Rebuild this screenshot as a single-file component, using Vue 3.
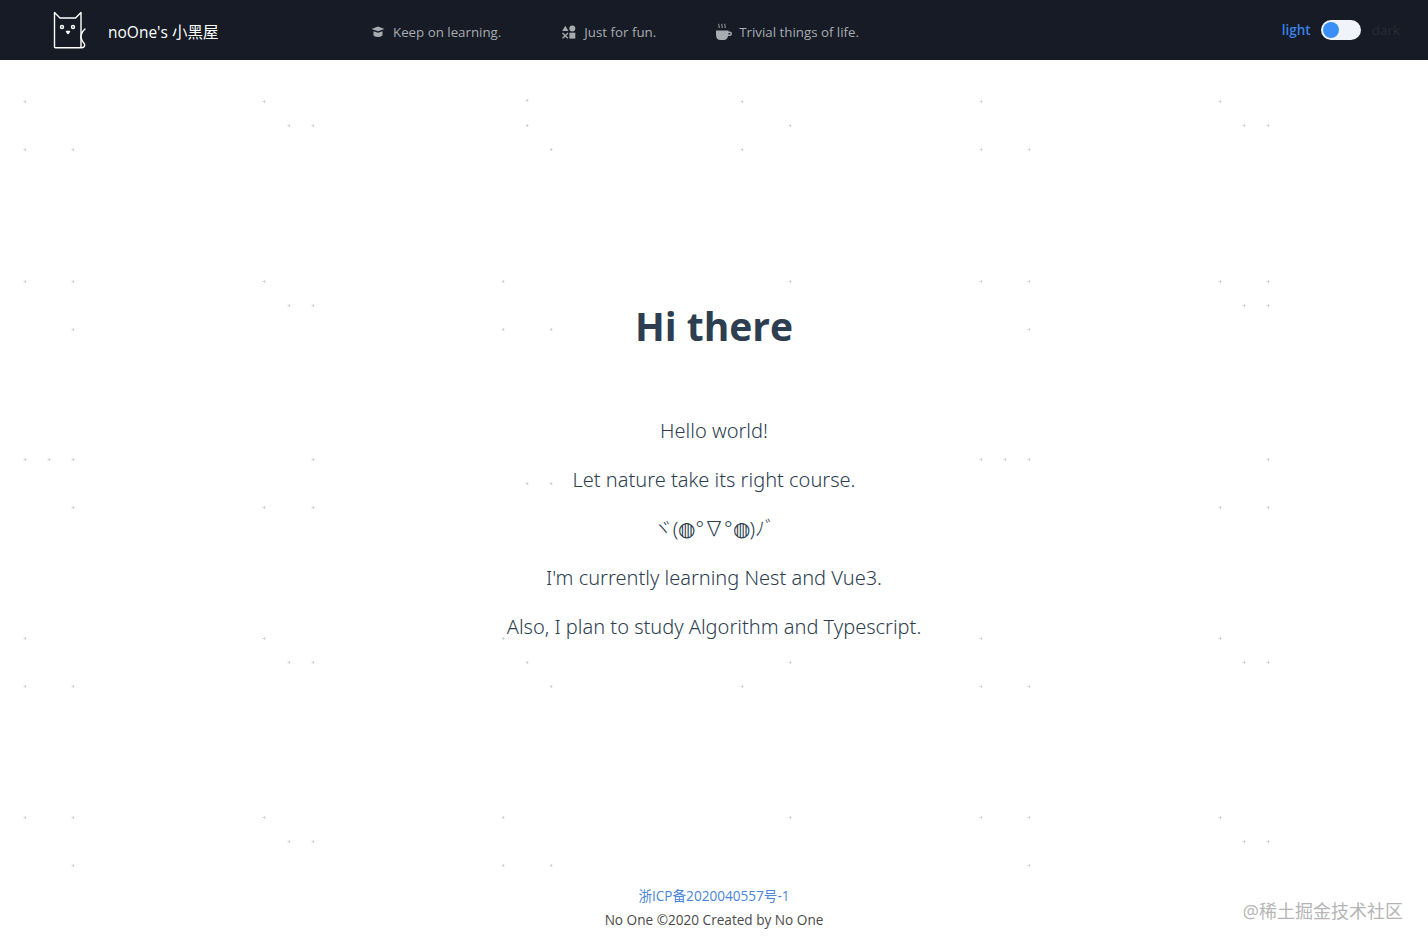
<script setup>
const navItems = [
  { key: 'learn', label: 'Keep on learning.' },
  { key: 'fun', label: 'Just for fun.' },
  { key: 'life', label: 'Trivial things of life.' },
];

const lines = [
  'Hello world!',
  'Let nature take its right course.',
  'ヾ(◍°∇°◍)ﾉﾞ',
  "I'm currently learning Nest and Vue3.",
  'Also, I plan to study Algorithm and Typescript.',
];

// star positions on the background canvas
const stars = [
  [25, 101], [264, 101], [527, 100], [742, 101], [981, 101], [1220, 101],
  [289, 125], [313, 125], [527, 125], [790, 125], [1244, 125], [1268, 125],
  [25, 149], [73, 149], [551, 149], [742, 149], [981, 149], [1029, 149],
  [25, 281], [73, 281], [264, 281], [503, 281], [790, 281], [981, 281], [1029, 281], [1220, 281], [1268, 281],
  [289, 305], [313, 305], [1244, 305], [1268, 305],
  [73, 329], [503, 329], [551, 329], [1029, 329],
  [25, 459], [49, 459], [73, 459], [313, 459], [981, 459], [1005, 459], [1029, 459], [1268, 459],
  [527, 483], [551, 483],
  [73, 507], [264, 507], [313, 507], [1220, 507], [1268, 507],
  [25, 638], [264, 638], [503, 638], [981, 638], [1220, 638],
  [289, 662], [313, 662], [527, 662], [790, 662], [1244, 662], [1268, 662],
  [25, 686], [73, 686], [551, 686], [742, 686], [981, 686], [1029, 686],
  [25, 817], [73, 817], [264, 817], [503, 817], [790, 817], [981, 817], [1029, 817], [1220, 817],
  [289, 841], [313, 841], [1244, 841], [1268, 841],
  [73, 865], [503, 865], [551, 865], [1029, 865],
];
</script>

<template>
  <div class="page">
    <svg class="stars" width="1428" height="947" viewBox="0 0 1428 947">
      <g v-for="s in stars" :key="s[0] + '-' + s[1]">
        <path :d="`M${s[0] - 1.5} ${s[1] + 0.5}h3M${s[0] + 0.5} ${s[1] - 1}v3`" stroke="#d4d4d4" stroke-width="1" />
      </g>
    </svg>

    <header class="topbar">
      <div class="brand">
        <svg class="logo" width="34" height="38" viewBox="0 0 34 38" fill="none" stroke="#fff" stroke-width="1.4" stroke-linejoin="round" stroke-linecap="round">
          <path d="M1.500 1.500 7 7H22.500L28 1.500V35.700q0 1-1 1H2.500q-1 0-1-1z" />
          <path d="M32 18Q27.500 22 28 27Q29 30 31.500 33Q32.500 36.500 28 36.700" />
          <circle cx="9" cy="16" r="1.500" />
          <circle cx="20" cy="16" r="1.500" />
          <path d="M13.500 20.500h3l-1.500 2z" fill="#fff" />
        </svg>
        <span class="brand-name">noOne's 小黑屋</span>
      </div>

      <nav class="nav">
        <a v-for="item in navItems" :key="item.key" class="nav-item">
          <svg v-if="item.key === 'learn'" class="nav-icon" width="14" height="14" viewBox="0 0 14 14" fill="#a8abb0">
            <path d="M7 1.500 13.500 4 7 6.300 .5 4z" />
            <path d="M2.500 6.300 7 7.800l4.500-1.500V10.500Q7 13.500 2.500 10.500z" />
          </svg>
          <svg v-else-if="item.key === 'fun'" class="nav-icon" width="14" height="14" viewBox="0 0 14 14" fill="#a8abb0">
            <path d="M3.300 .8 6.400 6H.2z" />
            <circle cx="10.300" cy="3.500" r="3" />
            <path d="M1 7.600l2.300 2.100L5.500 7.600l.9 1-2.100 2.100 2.100 2.100-.9 1-2.200-2.100L1 13.800l-1-1 2.300-2.100L0 8.600z" />
            <rect x="7.400" y="7.700" width="5.900" height="5.900" />
          </svg>
          <svg v-else class="nav-icon cup" width="18" height="18" viewBox="0 0 18 18" fill="#a8abb0">
            <path d="M1 7.500h12.500v1h1.300a2.200 2.200 0 0 1 0 4.400h-1.700Q12 17 9 17H5.500Q1 17 1 11.500zM13.500 10v1.600h1.200a.8.800 0 0 0 0-1.600z" />
            <path d="M4 .8c-.9 1.200.9 2.600 0 4.200M7 .8c-.9 1.200.9 2.600 0 4.200M10 .8c-.9 1.200.9 2.600 0 4.200" fill="none" stroke="#a8abb0" stroke-width="1" />
          </svg>
          <span>{{ item.label }}</span>
        </a>
      </nav>

      <div class="theme">
        <span class="theme-light">light</span>
        <span class="switch"><i class="knob"></i></span>
        <span class="theme-dark">dark</span>
      </div>
    </header>

    <main class="main">
      <h1 class="title">Hi there</h1>
      <p v-for="line in lines" :key="line" class="line">{{ line }}</p>
    </main>

    <footer class="footer">
      <a class="icp">浙ICP备2020040557号-1</a>
      <div class="copy">No One ©2020 Created by No One</div>
    </footer>

    <div class="watermark">@稀土掘金技术社区</div>
  </div>
</template>

<style>
html,
body {
  margin: 0;
  background: #fff;
}
</style>

<style scoped>
.page {
  position: relative;
  width: 1428px;
  height: 947px;
  overflow: hidden;
  display: flex;
  flex-direction: column;
  font-family: "Open Sans", "Noto Sans CJK SC", sans-serif;
  color: #2c3e50;
}

.stars {
  position: absolute;
  left: 0;
  top: 0;
}

.topbar {
  position: relative;
  height: 60px;
  flex: none;
  background: #161b25;
  display: flex;
  align-items: center;
  padding: 0 28px 0 53px;
}

.brand {
  display: flex;
  align-items: center;
  width: 318px;
}

.logo {
  margin-right: 21px;
}

.brand-name {
  color: #fff;
  font-size: 15.5px;
  margin-top: 2px;
}

.nav {
  display: flex;
  flex: 1;
  font-size: 13.3px;
  color: #a8abb0;
  margin-top: 4px;
}

.nav-item {
  display: flex;
  align-items: center;
  margin-right: 61px;
}

.nav-icon {
  margin-right: 8px;
}

.cup {
  margin-left: -2px;
  margin-right: 6px;
}

.theme {
  display: flex;
  align-items: center;
  font-size: 13.5px;
}

.theme-light {
  color: #3b82e6;
  font-weight: 600;
}

.theme-dark {
  color: #262b34;
}

.switch {
  width: 40px;
  height: 20px;
  border-radius: 10px;
  background: #f0f3fb;
  margin: 0 11px 0 10px;
  display: flex;
  align-items: center;
  padding-left: 2px;
  box-sizing: border-box;
}

.knob {
  width: 16px;
  height: 16px;
  border-radius: 50%;
  background: #3a8ff7;
}

.main {
  position: relative;
  flex: 1;
  display: flex;
  flex-direction: column;
  align-items: center;
  padding-top: 240px;
}

.title {
  margin: 0 0 64px;
  font-size: 39px;
  line-height: 52px;
  font-weight: 700;
}

.line {
  margin: 0 0 19px;
  font-family: "Noto Sans", "Noto Sans CJK SC", sans-serif;
  font-size: 20px;
  line-height: 30px;
  font-weight: 300;
}

.footer {
  position: relative;
  text-align: center;
  font-size: 13.6px;
  line-height: 24px;
  padding-bottom: 15px;
  color: #4a4a4a;
}

.icp {
  display: block;
  color: #4a86d8;
}

.watermark {
  position: absolute;
  right: 25px;
  bottom: 24px;
  font-size: 18px;
  color: #b5b5b5;
}
</style>
